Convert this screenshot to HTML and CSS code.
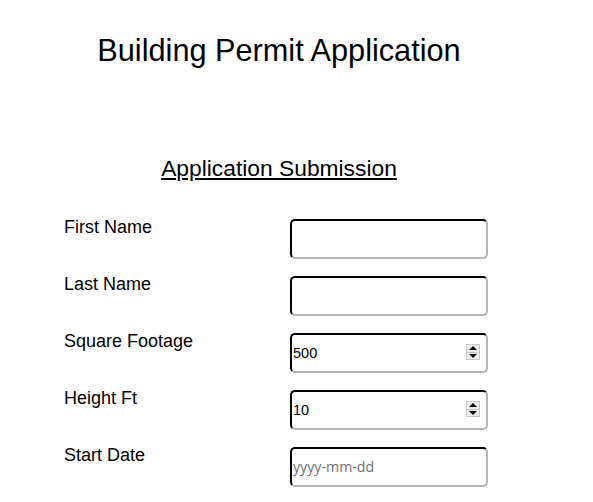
FILE: index.html
```html
<!DOCTYPE html>
<html>
<head>
<meta charset="utf-8">
<link rel="stylesheet" href="styles.css">
</head>
<body>
<div class="page">
  <h1 class="title">Building Permit Application</h1>
  <h2 class="subtitle">Application Submission</h2>
  <form class="form">
    <label class="label">First Name</label>
    <div class="field"><input class="input" type="text"></div>
    <label class="label">Last Name</label>
    <div class="field"><input class="input" type="text"></div>
    <label class="label">Square Footage</label>
    <div class="field"><input class="input" type="text" value="500"><span class="spin"><span class="up"></span><span class="down"></span></span></div>
    <label class="label">Height Ft</label>
    <div class="field"><input class="input" type="text" value="10"><span class="spin"><span class="up"></span><span class="down"></span></span></div>
    <label class="label">Start Date</label>
    <div class="field"><input class="input date" type="text" placeholder="yyyy-mm-dd"></div>
  </form>
</div>
</body>
</html>
```

FILE: styles.css
```css
html, body {
  background: #fff;
}
body {
  margin: 8px;
  font-family: "Liberation Sans", Arial, sans-serif;
  color: #000;
}
.page {
  width: 542px;
}
.title {
  margin: 25px 0 0 0;
  font-size: 30.7px;
  font-weight: normal;
  line-height: 36px;
  text-align: center;
}
.subtitle {
  margin: 86px 0 0 0;
  font-size: 22.8px;
  font-weight: normal;
  line-height: 26px;
  text-align: center;
  text-decoration: underline;
  text-underline-offset: 2px;
}
.form {
  margin: 38px 0 0 56px;
  display: grid;
  grid-template-columns: 226px 198px;
  row-gap: 17px;
  align-items: start;
}
.label {
  font-size: 18px;
  line-height: 20px;
  margin-top: -2px;
}
.field {
  position: relative;
  height: 40px;
}
.input {
  box-sizing: border-box;
  width: 198px;
  height: 40px;
  margin: 0;
  padding: 0 1px;
  border-style: solid;
  border-width: 2px;
  border-color: #000 #b4b4b4 #b4b4b4 #000;
  border-radius: 5px;
  font-family: "Liberation Sans", Arial, sans-serif;
  font-size: 14.5px;
  color: #000;
  background: #fff;
  outline: none;
}
.input.date::placeholder {
  color: #707070;
  font-family: "Open Sans", "Liberation Sans", sans-serif;
  font-size: 14.2px;
}
.spin {
  position: absolute;
  left: 176px;
  top: 11px;
  width: 14px;
  height: 16px;
  box-sizing: border-box;
  border: 1px solid #c8c8c8;
  background: #ececec;
  display: flex;
  flex-direction: column;
}
.up, .down {
  flex: 1;
  display: flex;
  align-items: center;
  justify-content: center;
}
.up {
  border-bottom: 1px solid #c8c8c8;
}
.up::before {
  content: "";
  border-left: 4px solid transparent;
  border-right: 4px solid transparent;
  border-bottom: 4px solid #000;
}
.down::before {
  content: "";
  border-left: 4px solid transparent;
  border-right: 4px solid transparent;
  border-top: 4px solid #000;
}
```
